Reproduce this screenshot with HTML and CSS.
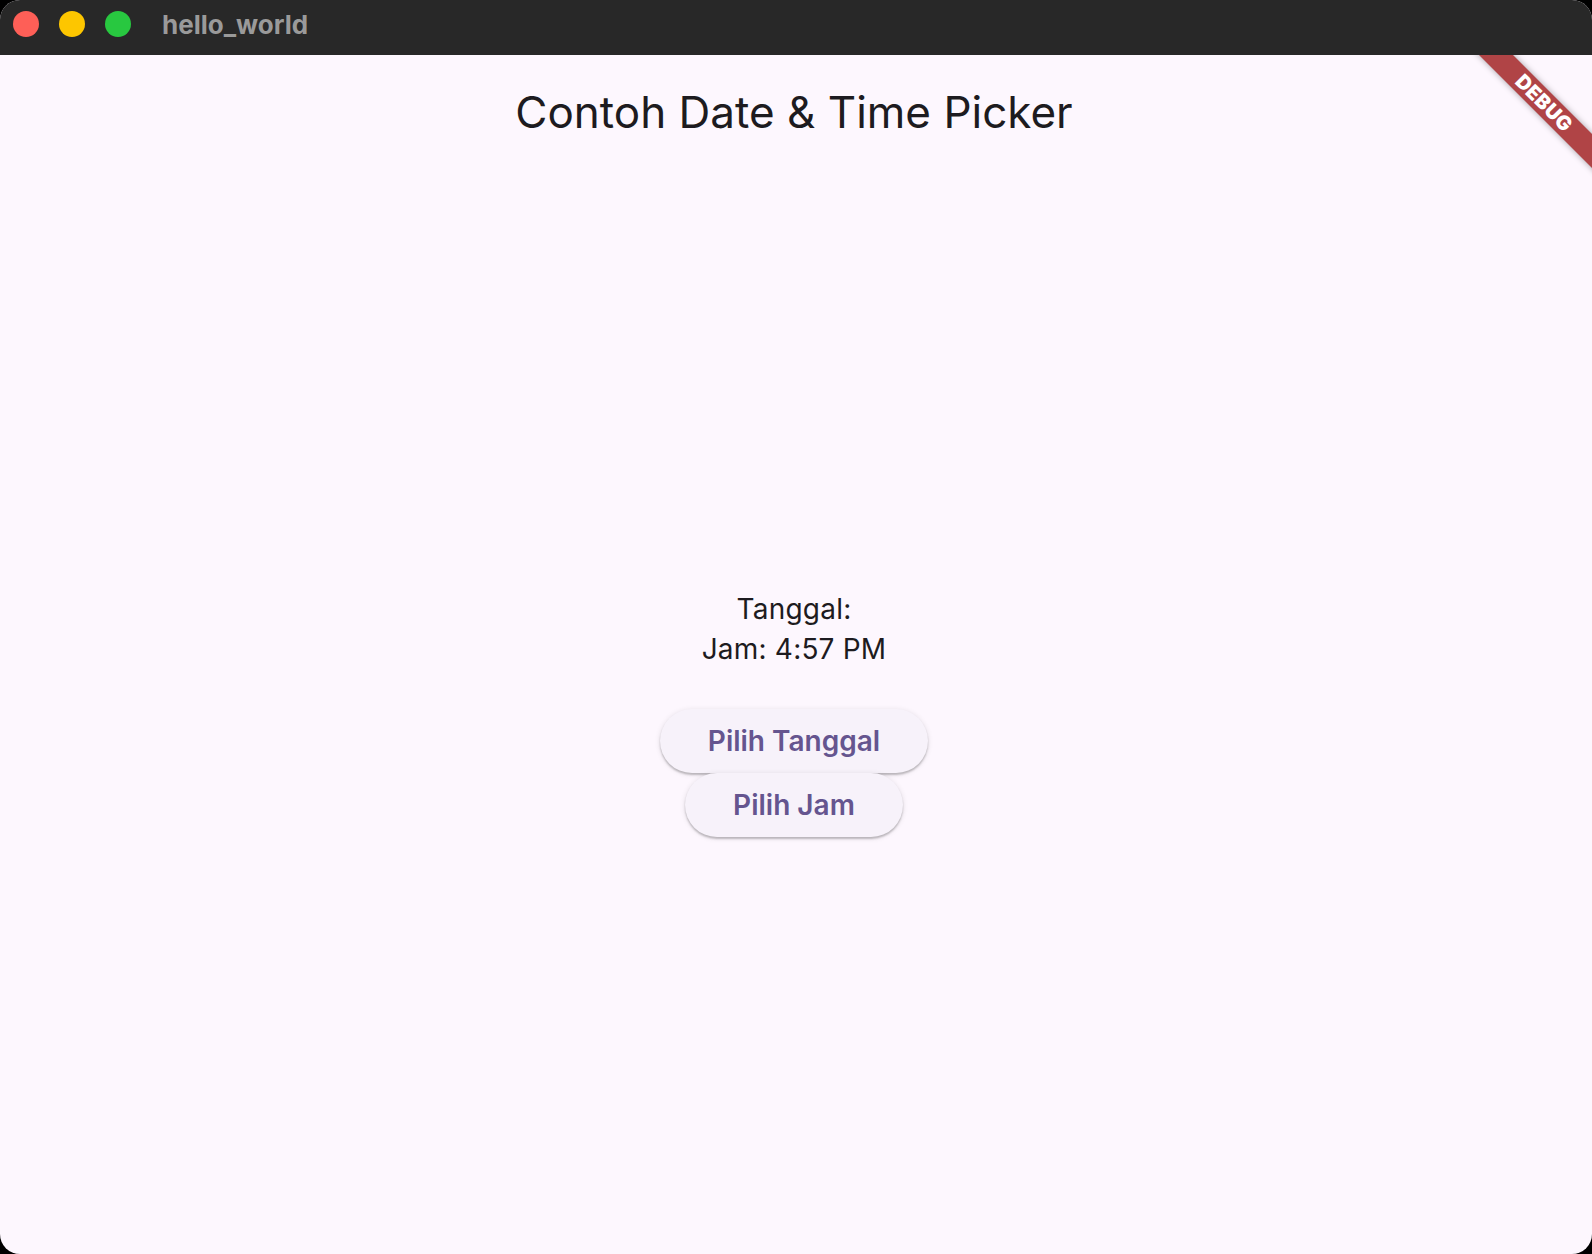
FILE: index.html
```html
<!DOCTYPE html>
<html lang="id">
<head>
<meta charset="utf-8">
<title>hello_world</title>
<link rel="stylesheet" href="styles.css">
</head>
<body>
<div class="window">
  <header class="titlebar">
    <div class="lights">
      <span class="light light-red"></span>
      <span class="light light-yellow"></span>
      <span class="light light-green"></span>
    </div>
    <span class="window-title">hello_world</span>
  </header>
  <main class="app">
    <div class="appbar">
      <h1 class="appbar-title">Contoh Date &amp; Time Picker</h1>
    </div>
    <section class="content">
      <p class="line">Tanggal: </p>
      <p class="line">Jam: 4:57 PM</p>
      <div class="spacer"></div>
      <button class="btn" type="button">Pilih Tanggal</button>
      <button class="btn" type="button">Pilih Jam</button>
    </section>
    <div class="debug-clip">
      <div class="debug-band">DEBUG</div>
    </div>
  </main>
</div>
</body>
</html>
```

FILE: styles.css
```css
* { box-sizing: border-box; }

html, body {
  margin: 0;
  padding: 0;
  background: #000;
}

body {
  width: 1592px;
  height: 1254px;
  overflow: hidden;
}

.window {
  width: 1592px;
  height: 1254px;
  border-radius: 20px;
  overflow: hidden;
  display: flex;
  flex-direction: column;
  background: #fdf7fe;
}

.titlebar {
  height: 55px;
  flex: 0 0 55px;
  background: #282828;
  display: flex;
  align-items: center;
  padding-left: 13px;
  gap: 31px;
}

.lights {
  display: flex;
  gap: 20px;
  margin-top: -7px;
}

.light {
  width: 26px;
  height: 26px;
  border-radius: 50%;
  display: block;
}
.light-red { background: #fe5f57; }
.light-yellow { background: #fdc600; }
.light-green { background: #28c840; }

.window-title {
  font-family: Inter, "Liberation Sans", Arial, sans-serif;
  font-weight: 700;
  font-size: 26px;
  letter-spacing: 0;
  color: #9a9a9a;
  margin-top: -6px;
}

.app {
  flex: 1;
  position: relative;
  display: flex;
  flex-direction: column;
  font-family: Inter, "Noto Sans", sans-serif;
  color: #1d1b20;
}

.appbar {
  height: 112px;
  flex: 0 0 112px;
  display: flex;
  align-items: center;
  justify-content: center;
  padding-top: 2px;
  padding-right: 4px;
}

.appbar-title {
  margin: 0;
  font-size: 44px;
  font-weight: 400;
  line-height: 56px;
}

.content {
  flex: 1;
  display: flex;
  flex-direction: column;
  align-items: center;
  justify-content: center;
  padding-top: 4px;
  padding-right: 4px;
}

.line {
  margin: 0;
  font-size: 28px;
  line-height: 40px;
  letter-spacing: 0.2px;
}

.spacer { height: 40px; }

.btn {
  height: 64px;
  border: none;
  border-radius: 32px;
  padding: 0 48px;
  background: #f7f2fa;
  color: #65558f;
  font-family: Inter, "Noto Sans", sans-serif;
  font-size: 28px;
  font-weight: 600;
  box-shadow: 0 2px 2px rgba(0, 0, 0, 0.22), 0 1px 5px 1px rgba(0, 0, 0, 0.08);
  cursor: pointer;
}

.debug-clip {
  position: absolute;
  top: 0;
  right: 0;
  width: 130px;
  height: 130px;
  overflow: hidden;
  pointer-events: none;
}

.debug-band {
  position: absolute;
  left: 82px;   /* center at (130-48, 48) */
  top: 48px;
  width: 200px;
  height: 24px;
  margin-left: -100px;
  margin-top: -12px;
  transform: rotate(45deg);
  background: #b04446;
  box-shadow: 0 0 6px rgba(0, 0, 0, 0.35);
  color: #fff;
  font-family: Inter, "Liberation Sans", Arial, sans-serif;
  font-weight: 900;
  font-size: 20px;
  line-height: 24px;
  text-align: center;
  letter-spacing: 0.3px;
}
```
